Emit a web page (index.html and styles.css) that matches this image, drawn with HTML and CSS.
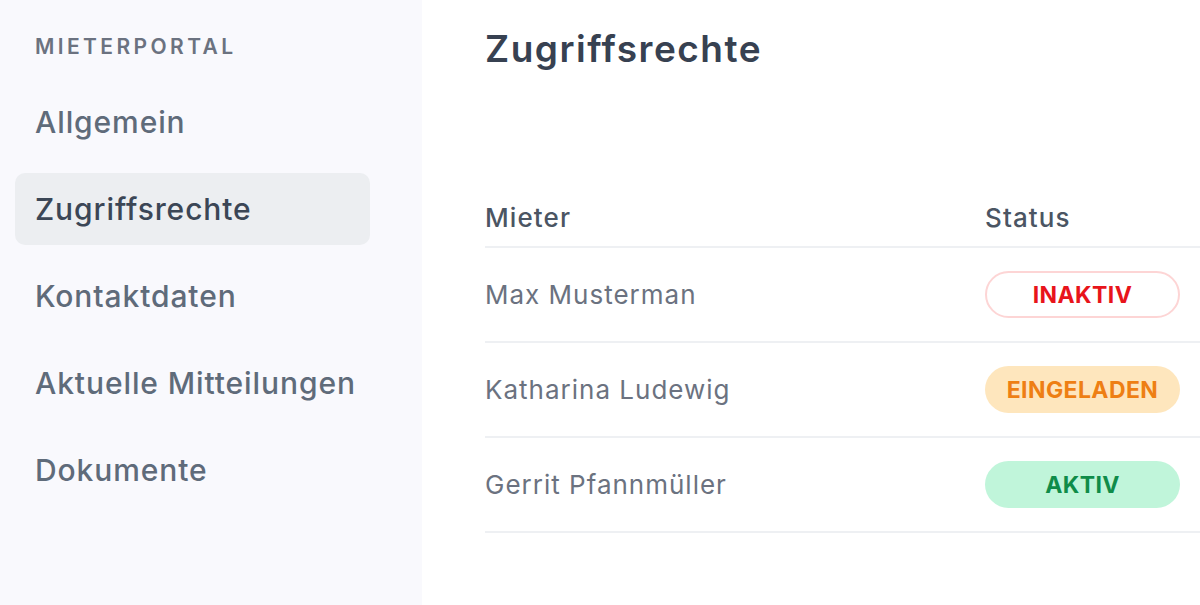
FILE: index.html
```html
<!DOCTYPE html>
<html lang="de">
<head>
<meta charset="utf-8">
<title>Mieterportal – Zugriffsrechte</title>
<link rel="stylesheet" href="styles.css">
</head>
<body>
<div class="app">
  <aside class="sidebar">
    <div class="sidebar-label">MIETERPORTAL</div>
    <nav class="nav">
      <a class="nav-item">Allgemein</a>
      <a class="nav-item active">Zugriffsrechte</a>
      <a class="nav-item">Kontaktdaten</a>
      <a class="nav-item">Aktuelle Mitteilungen</a>
      <a class="nav-item">Dokumente</a>
    </nav>
  </aside>
  <main class="main">
    <h1 class="title">Zugriffsrechte</h1>
    <div class="table">
      <div class="row head">
        <div class="cell name">Mieter</div>
        <div class="cell status">Status</div>
      </div>
      <div class="row">
        <div class="cell name">Max Musterman</div>
        <div class="cell status"><span class="badge inactive">INAKTIV</span></div>
      </div>
      <div class="row">
        <div class="cell name">Katharina Ludewig</div>
        <div class="cell status"><span class="badge invited">EINGELADEN</span></div>
      </div>
      <div class="row">
        <div class="cell name">Gerrit Pfannmüller</div>
        <div class="cell status"><span class="badge active">AKTIV</span></div>
      </div>
    </div>
  </main>
</div>
</body>
</html>
```

FILE: styles.css
```css
* { box-sizing: border-box; }
html, body {
  margin: 0;
  padding: 0;
  height: 100%;
  background: #ffffff;
  font-family: Inter, "Noto Sans", "Liberation Sans", sans-serif;
}
.app {
  display: flex;
  height: 605px;
  overflow: hidden;
}
.sidebar {
  width: 422px;
  flex: none;
  background: #f9f9fd;
  padding: 32px 52px 0 15px;
}
.sidebar-label {
  padding-left: 20px;
  font-size: 21px;
  line-height: 30px;
  font-weight: 600;
  letter-spacing: 3.4px;
  color: #6b7280;
}
.nav {
  display: flex;
  flex-direction: column;
  gap: 15px;
  margin-top: 24px;
}
.nav-item {
  display: flex;
  align-items: center;
  height: 72px;
  padding-left: 20px;
  border-radius: 10px;
  font-size: 30px;
  font-weight: 500;
  letter-spacing: 0.9px;
  color: #5f6b7a;
}
.nav-item.active {
  background: #eceef1;
  color: #3b4656;
}
.main {
  flex: 1;
  padding: 26px 0 0 63px;
  overflow: hidden;
}
.title {
  margin: 0;
  font-size: 37px;
  line-height: 46px;
  font-weight: 600;
  letter-spacing: 1.5px;
  color: #374151;
}
.table {
  margin-top: 130px;
  width: 800px;
}
.row {
  display: flex;
  align-items: center;
  height: 95px;
  border-bottom: 2px solid #eef0f3;
}
.row.head {
  height: 46px;
  align-items: flex-start;
}
.cell.name {
  width: 500px;
  font-size: 26px;
  letter-spacing: 1px;
  color: #6b7280;
}
.row.head .cell {
  font-size: 26px;
  font-weight: 500;
  letter-spacing: 1.1px;
  color: #4b5563;
  line-height: 32px;
}
.cell.status {
  flex: 1;
}
.badge {
  display: inline-flex;
  align-items: center;
  justify-content: center;
  width: 195px;
  height: 47px;
  border-radius: 24px;
  font-size: 23px;
  font-weight: 700;
  letter-spacing: 0.4px;
}
.badge.inactive {
  background: #ffffff;
  border: 2px solid #fdd5d5;
  color: #e8141b;
}
.badge.invited {
  background: #fee6bd;
  color: #ee7f14;
}
.badge.active {
  background: #c0f5da;
  color: #0f8c49;
}
```
